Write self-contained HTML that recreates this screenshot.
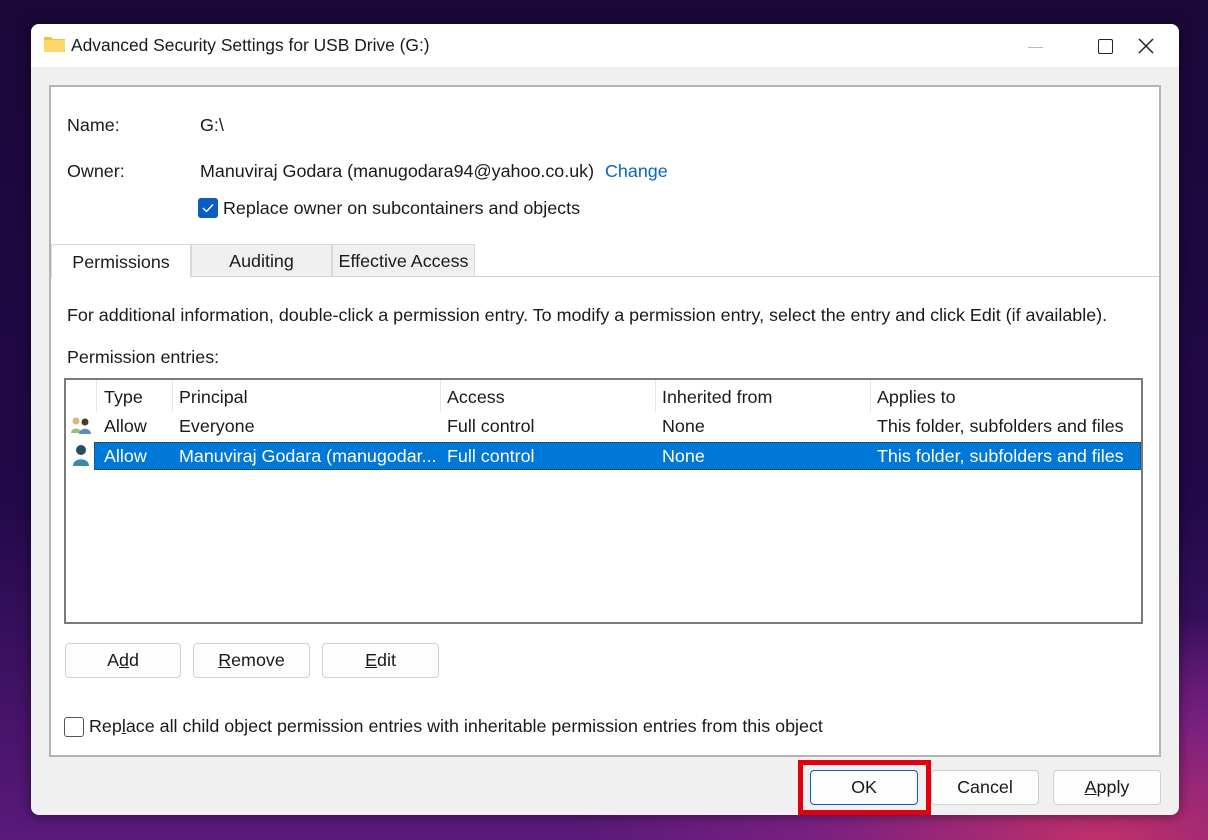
<!DOCTYPE html>
<html><head><meta charset="utf-8"><style>
*{box-sizing:border-box;margin:0;padding:0}
body{width:1208px;height:840px;overflow:hidden;font-family:"Liberation Sans",sans-serif;font-size:17.9px;color:#1a1a1a;
background:radial-gradient(ellipse 700px 300px at 1100px 840px,#c0306a 0%,#7a2080 40%,transparent 75%),linear-gradient(180deg,#1a0838 0%,#22094a 60%,#5a1a7a 100%);position:relative}
.win{position:absolute;left:31px;top:24px;width:1148px;height:791px;background:#f0f0f0;border-radius:8px;overflow:hidden;box-shadow:0 0 12px rgba(0,0,0,.5)}
.title{height:43px;background:#fff;position:relative}
.t{position:absolute;white-space:nowrap}
.panel{position:absolute;left:18px;top:61px;width:1112px;height:672px;background:#fff;border:2px solid #b4b4b4}
.tab{position:absolute;top:157px;height:33px;border:1px solid #d8d8d8;background:#f0f0f0;text-align:center;line-height:32px}
.btn{position:absolute;height:35px;border:1px solid #d0d0d0;border-radius:4px;background:#fdfdfd;text-align:center;line-height:33px}
.list{position:absolute;left:13px;top:291px;width:1079px;height:246px;border:2px solid #7a7a7a;background:#fff}
.hd{position:absolute;top:0;height:32px;line-height:34px;border-right:1px solid #e5e5e5}
.row{position:absolute;line-height:28px}
u{text-decoration:underline}
</style></head><body>
<div class="win">
 <div class="title">
  <svg class="t" style="left:13px;top:11px" width="21" height="17"><path d="M0 2h7l2 2h12v13H0z" fill="#f0c040"/><path d="M0 5h21v12H0z" fill="#fad96a"/></svg>
  <div class="t" style="left:40px;top:11px;font-size:17.4px">Advanced Security Settings for USB Drive (G:)</div>
  <div class="t" style="left:997px;top:23px;width:15px;height:1px;background:#bbb"></div>
  <div class="t" style="left:1067px;top:15px;width:15px;height:15px;border:1.5px solid #222;border-radius:2px"></div>
  <svg class="t" style="left:1106px;top:13px" width="18" height="18"><path d="M2 2L16 16M16 2L2 16" stroke="#222" stroke-width="1.5"/></svg>
 </div>
 <div class="panel">
  <div class="t" style="left:16px;top:28px">Name:</div>
  <div class="t" style="left:149px;top:28px">G:\</div>
  <div class="t" style="left:16px;top:74px">Owner:</div>
  <div class="t" style="left:149px;top:74px">Manuviraj Godara (manugodara94@yahoo.co.uk)</div>
  <div class="t" style="left:554px;top:74px;color:#0a64c0">Change</div>
  <div class="t" style="left:147px;top:111px;width:20px;height:20px;background:#0a5cc2;border-radius:3px"><svg width="20" height="20"><path d="M5 10l3.5 3.5L15 6.5" stroke="#fff" stroke-width="1.4" fill="none"/></svg></div>
  <div class="t" style="left:172px;top:111px">Replace owner on subcontainers and objects</div>
  <div class="t" style="left:0;top:189px;width:1108px;height:1px;background:#d0d0d0"></div>
  <div class="tab" style="left:0;width:140px;background:#fff;border-bottom-color:#fff;top:157px;height:34px"><span style="position:relative;top:1px">Permissions</span></div>
  <div class="tab" style="left:140px;width:141px">Auditing</div>
  <div class="tab" style="left:281px;width:143px">Effective Access</div>
  <div class="t" style="left:16px;top:218px">For additional information, double-click a permission entry. To modify a permission entry, select the entry and click Edit (if available).</div>
  <div class="t" style="left:16px;top:260px">Permission entries:</div>
  <div class="list">
   <div class="hd" style="left:0;width:31px"></div>
   <div class="hd" style="left:31px;width:76px;padding-left:7px">Type</div>
   <div class="hd" style="left:107px;width:268px;padding-left:6px">Principal</div>
   <div class="hd" style="left:375px;width:215px;padding-left:6px">Access</div>
   <div class="hd" style="left:590px;width:215px;padding-left:6px">Inherited from</div>
   <div class="hd" style="left:805px;width:270px;padding-left:6px;border:none">Applies to</div>
   <svg class="t" style="left:4px;top:36px" width="22" height="18"><circle cx="6" cy="5" r="3.5" fill="#d8b880"/><path d="M1 17c0-6 10-6 10 0z" fill="#9bc070"/><circle cx="15" cy="6" r="3.5" fill="#4a3a30"/><path d="M9 18c0-7 12-7 12 0z" fill="#5a8ac8"/></svg>
   <div class="row" style="left:38px;top:32px">Allow</div>
   <div class="row" style="left:113px;top:32px">Everyone</div>
   <div class="row" style="left:381px;top:32px">Full control</div>
   <div class="row" style="left:596px;top:32px">None</div>
   <div class="row" style="left:811px;top:32px">This folder, subfolders and files</div>
   <svg class="t" style="left:6px;top:64px" width="18" height="22"><circle cx="9" cy="6" r="5" fill="#2a4a6a"/><path d="M1 22c0-9 16-9 16 0z" fill="#3a8ab0"/></svg>
   <div class="t" style="left:28px;top:62px;width:1047px;height:28px;background:#0078d7;color:#fff;border:1px dotted #333">
    <div class="row" style="left:9px;top:-1px">Allow</div>
    <div class="row" style="left:84px;top:-1px">Manuviraj Godara (manugodar...</div>
    <div class="row" style="left:352px;top:-1px">Full control</div>
    <div class="row" style="left:567px;top:-1px">None</div>
    <div class="row" style="left:782px;top:-1px">This folder, subfolders and files</div>
   </div>
  </div>
  <div class="btn" style="left:14px;top:556px;width:116px">A<u>d</u>d</div>
  <div class="btn" style="left:142px;top:556px;width:117px"><u>R</u>emove</div>
  <div class="btn" style="left:271px;top:556px;width:117px"><u>E</u>dit</div>
  <div class="t" style="left:13px;top:630px;width:20px;height:20px;border:1.5px solid #555;border-radius:3px;background:#fff"></div>
  <div class="t" style="left:38px;top:629px">Rep<u>l</u>ace all child object permission entries with inheritable permission entries from this object</div>
 </div>
 <div class="btn" style="left:779px;top:746px;width:108px;border-color:#0a64b0">OK</div>
 <div class="btn" style="left:900px;top:746px;width:108px">Cancel</div>
 <div class="btn" style="left:1022px;top:746px;width:108px"><u>A</u>pply</div>
</div>
<div style="position:absolute;left:798px;top:760px;width:133px;height:55px;border:5px solid #e00010"></div>
</body></html>
